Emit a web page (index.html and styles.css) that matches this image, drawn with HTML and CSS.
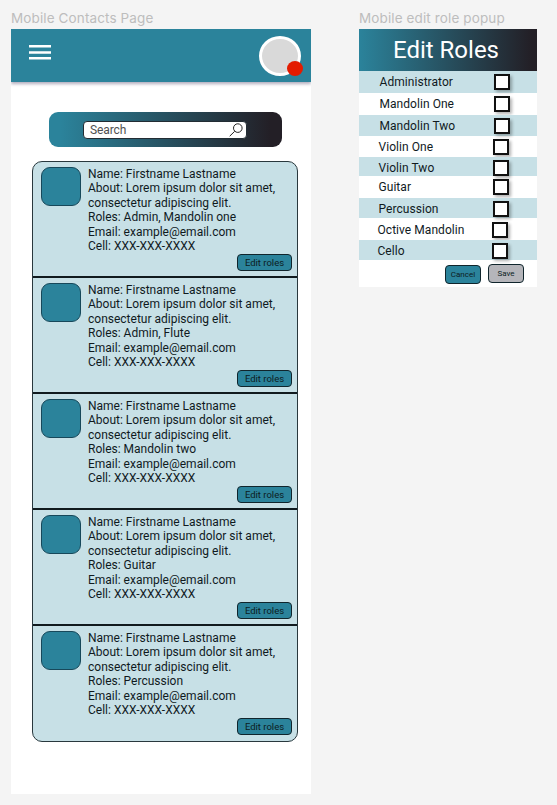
FILE: index.html
```html
<!DOCTYPE html>
<html lang="en">
<head>
<meta charset="utf-8">
<title>Mobile Contacts</title>
<link rel="stylesheet" href="styles.css">
</head>
<body>
<main class="canvas">
  <section class="contacts">
    <h2 class="frame-label">Mobile Contacts Page</h2>
    <div class="phone">
      <header class="topbar">
        <svg class="menu" width="22" height="15" viewBox="0 0 22 15"><path d="M0 1.3h22M0 7.5h22M0 13.3h22" stroke="#fff" stroke-width="2.4"/></svg>
        <div class="avatar"><span class="status"></span></div>
      </header>
      <div class="searchbar">
        <div class="search"><span>Search</span>
          <svg width="14" height="14" viewBox="0 0 14 14" fill="none" stroke="#222" stroke-width="1"><circle cx="8.8" cy="5.1" r="4.3"/><path d="M5.7 8.3L.7 13.2"/></svg>
        </div>
      </div>
      <div class="list">
        <article class="card"><div class="photo"></div><div class="info"><p>Name: Firstname Lastname</p><p>About: Lorem ipsum dolor sit amet,</p><p>consectetur adipiscing elit.</p><p>Roles: Admin, Mandolin one</p><p>Email: example@email.com</p><p>Cell: XXX-XXX-XXXX</p><button class="edit">Edit roles</button></div></article>
        <article class="card"><div class="photo"></div><div class="info"><p>Name: Firstname Lastname</p><p>About: Lorem ipsum dolor sit amet,</p><p>consectetur adipiscing elit.</p><p>Roles: Admin, Flute</p><p>Email: example@email.com</p><p>Cell: XXX-XXX-XXXX</p><button class="edit">Edit roles</button></div></article>
        <article class="card"><div class="photo"></div><div class="info"><p>Name: Firstname Lastname</p><p>About: Lorem ipsum dolor sit amet,</p><p>consectetur adipiscing elit.</p><p>Roles: Mandolin two</p><p>Email: example@email.com</p><p>Cell: XXX-XXX-XXXX</p><button class="edit">Edit roles</button></div></article>
        <article class="card"><div class="photo"></div><div class="info"><p>Name: Firstname Lastname</p><p>About: Lorem ipsum dolor sit amet,</p><p>consectetur adipiscing elit.</p><p>Roles: Guitar</p><p>Email: example@email.com</p><p>Cell: XXX-XXX-XXXX</p><button class="edit">Edit roles</button></div></article>
        <article class="card"><div class="photo"></div><div class="info"><p>Name: Firstname Lastname</p><p>About: Lorem ipsum dolor sit amet,</p><p>consectetur adipiscing elit.</p><p>Roles: Percussion</p><p>Email: example@email.com</p><p>Cell: XXX-XXX-XXXX</p><button class="edit">Edit roles</button></div></article>
      </div>
    </div>
  </section>
  <section class="roles">
    <h2 class="frame-label">Mobile edit role popup</h2>
    <div class="popup">
      <h1 class="title">Edit Roles</h1>
      <ul class="rows">
        <li><span>Administrator</span><i class="box"></i></li>
        <li><span>Mandolin One</span><i class="box"></i></li>
        <li><span>Mandolin Two</span><i class="box"></i></li>
        <li class="mid"><span>Violin One</span><i class="box"></i></li>
        <li class="mid drop"><span>Violin Two</span><i class="box"></i></li>
        <li class="mid"><span>Guitar</span><i class="box"></i></li>
        <li class="mid drop"><span>Percussion</span><i class="box"></i></li>
        <li class="low drop"><span>Octive Mandolin</span><i class="box"></i></li>
        <li class="low drop"><span>Cello</span><i class="box"></i></li>
      </ul>
      <footer class="actions"><button class="cancel">Cancel</button><button class="save">Save</button></footer>
    </div>
  </section>
</main>
</body>
</html>
```

FILE: styles.css
```css
* { box-sizing: border-box; }
body { margin: 0; background: #f4f4f4; font-family: Roboto, "Liberation Sans", sans-serif; color: #101a1e; }
p, h1, h2, ul { margin: 0; padding: 0; font-weight: 400; }
button { font-family: inherit; padding: 0; color: #0b1c22; background: #2b839b; border: 1px solid #10252c; }
.canvas { display: flex; gap: 48px; width: 557px; height: 805px; padding: 9px 0 0 11px; overflow: hidden; }
.contacts { width: 300px; }
.roles { width: 178px; }
.frame-label { height: 20px; font-family: Inter, sans-serif; font-size: 13.5px; line-height: 19px; letter-spacing: .12px; color: #bdbdbd; white-space: nowrap; }

.phone { height: 765px; background: #fff; }
.topbar { display: flex; justify-content: space-between; height: 53px; padding: 7px 10px 0 18px; background: #2b839b; box-shadow: 0 2px 3px rgba(60, 50, 90, .4); clip-path: inset(0 0 -6px 0); }
.menu { margin-top: 9px; }
.avatar { position: relative; width: 42px; height: 40px; border: 3px solid #fff; border-radius: 50%; background: #d9d9d9; }
.status { position: absolute; left: 25px; top: 22px; width: 16px; height: 15px; border-radius: 50%; background: #e31b00; }
.searchbar { width: 233px; height: 35px; margin: 30px 0 0 38px; padding: 9px 0 0 34px; border-radius: 9px; background: linear-gradient(90deg, #2b839b 5%, #231f26 95%); }
.search { display: flex; justify-content: space-between; align-items: center; width: 164px; height: 18px; padding: 0 3px 0 6px; border: 1px solid #222c33; border-radius: 4px; background: #fff; font-size: 12px; letter-spacing: -.1px; color: #505050; }

.list { width: 266px; height: 581px; margin: 14px 0 0 21px; border: 1px solid #29383d; border-radius: 10px; background: #c7e0e6; }
.card { display: flex; height: 114px; padding: 5px 5px 0 8px; }
.card + .card { height: 116px; border-top: 2px solid #101a1e; }
.photo { width: 40px; height: 39px; margin-right: 7px; border: 1px solid #17485a; border-radius: 9px; background: #2b839b; }
.info { display: flex; flex-direction: column; width: 204px; font-size: 12px; line-height: 14.45px; white-space: nowrap; }
.edit { align-self: flex-end; width: 55px; height: 17px; margin-top: .3px; border-radius: 4px; font-size: 9.5px; line-height: 14px; }

.popup { height: 258px; background: #fff; }
.title { height: 42px; padding-right: 4px; background: linear-gradient(90deg, #2b839b, #231f26 97%); color: #fff; font-size: 24px; line-height: 43px; text-align: center; }
.rows { display: grid; grid-template-rows: 22px 22px 21px 21px 19px 22px 20px 22px 20px; list-style: none; font-size: 12px; letter-spacing: .05px; }
.rows li { display: flex; justify-content: space-between; align-items: center; padding: 0 27px 0 20.5px; }
.rows li:nth-child(odd) { background: #c7e0e6; }
.rows .mid { padding: 0 28px 0 19.5px; }
.rows .low { padding: 0 29px 0 18.5px; }
.rows .drop { padding-top: 2px; }
.box { width: 16px; height: 16px; border: 2px solid #111; background: #fff; box-shadow: 2px 2px 3px rgba(0, 0, 0, .3); }
.actions { display: flex; gap: 7px; padding: 4px 0 0 86px; }
.actions button { width: 36px; height: 19px; border-radius: 4px; font-size: 8px; }
.actions .cancel { margin-top: 1px; }
.actions .save { background: #b5b5ba; }
```
